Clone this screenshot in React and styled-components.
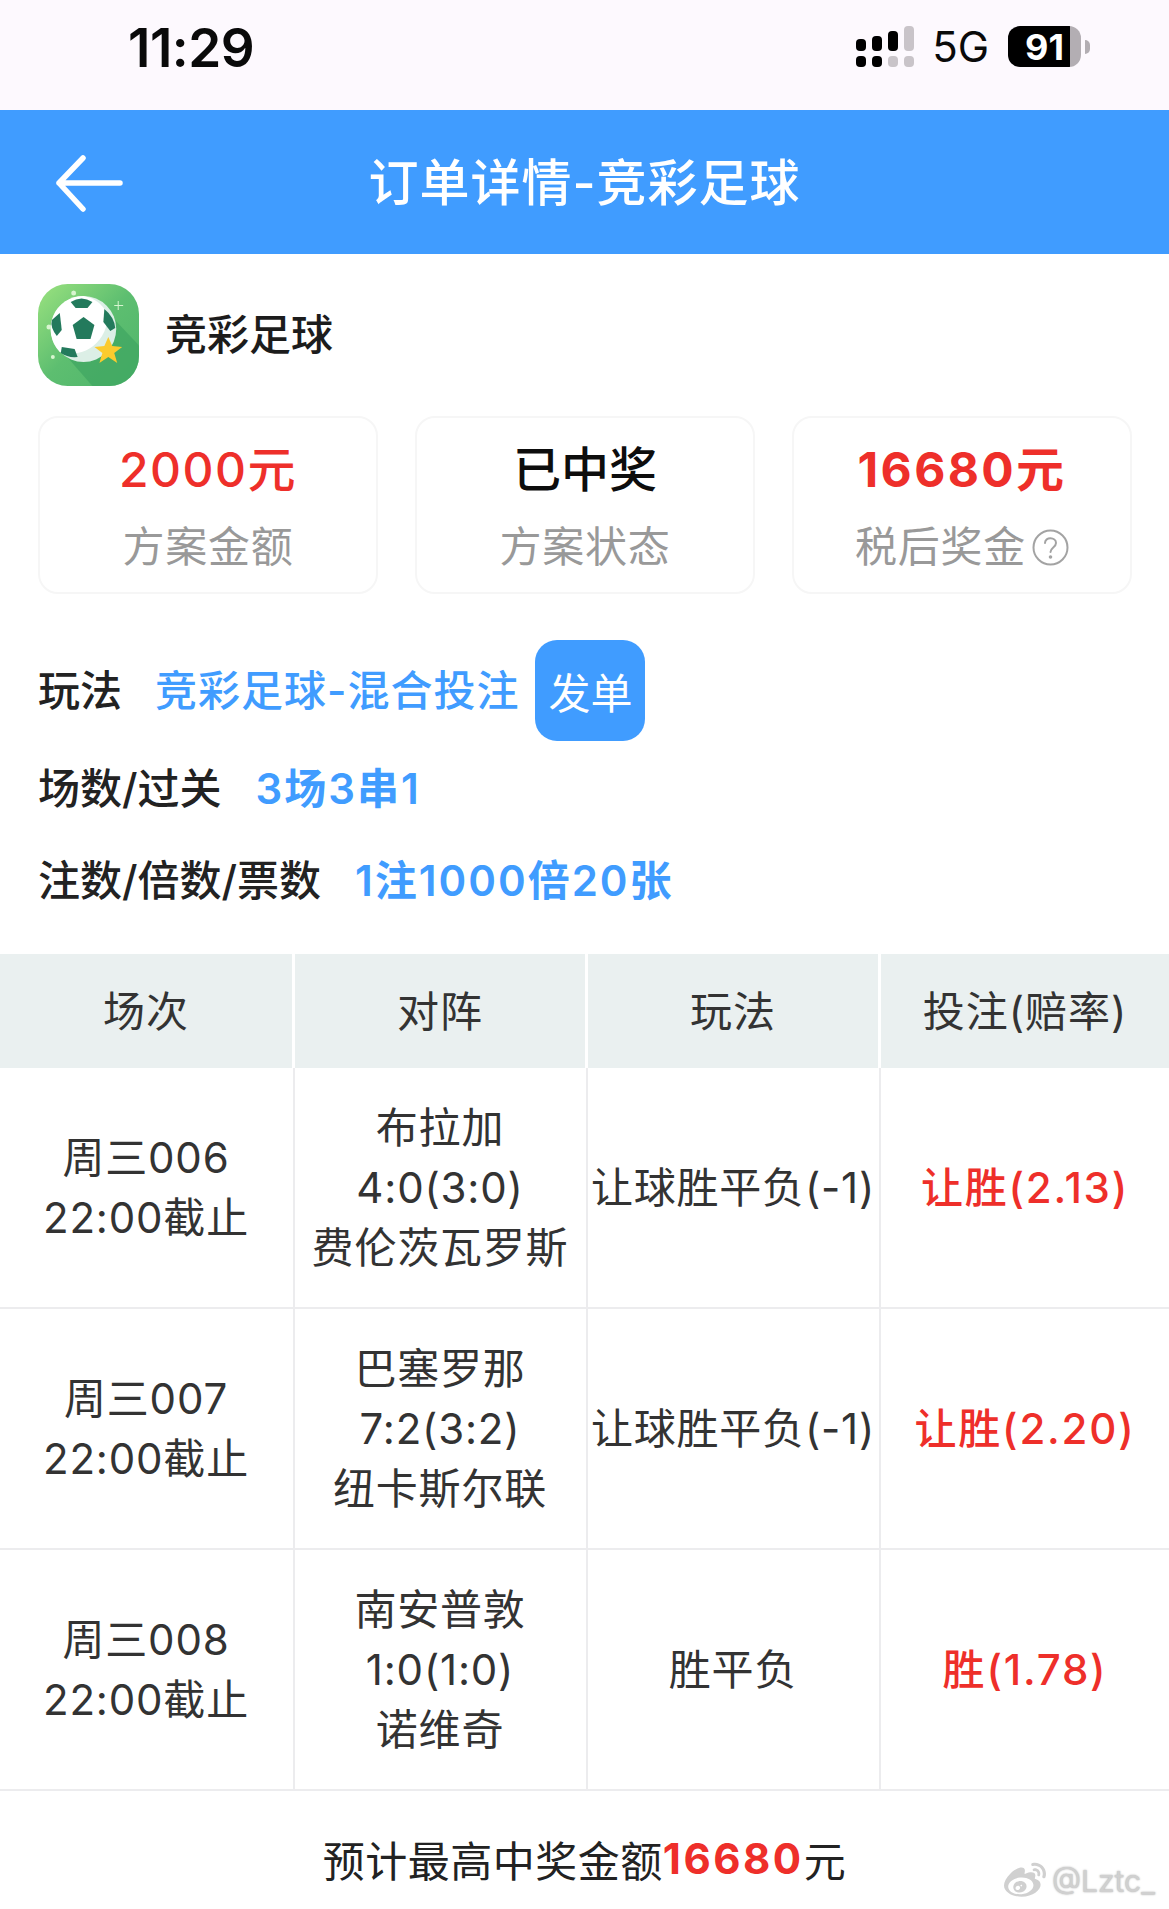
import styled, { createGlobalStyle } from 'styled-components';
import { FaWeibo } from 'react-icons/fa';

const GlobalStyle = createGlobalStyle`
  html, body {
    margin: 0;
    padding: 0;
    background: #fff;
  }
  * {
    box-sizing: border-box;
  }
  body {
    font-family: Inter, "Noto Sans CJK SC", sans-serif;
    color: #222;
  }
`;

const Page = styled.div`
  position: relative;
  width: 1169px;
  height: 1909px;
  overflow: hidden;
  background: #fff;
`;

/* status bar */
const StatusBar = styled.div`
  height: 110px;
  background: #fdf9fe;
  display: flex;
  align-items: flex-start;
  justify-content: space-between;
  padding: 18px 79px 0 128px;
`;

const Clock = styled.div`
  font-size: 53px;
  line-height: 60px;
  font-weight: 600;
  color: #0a0a0a;
  letter-spacing: -0.5px;
`;

const StatusIcons = styled.div`
  display: flex;
  align-items: center;
  margin-top: 8px;
  height: 41px;
`;

const NetLabel = styled.div`
  font-size: 42px;
  line-height: 41px;
  font-weight: 400;
  color: #0a0a0a;
  margin: 0 19px 0 16px;
`;

const Battery = styled.div`
  width: 73px;
  height: 41px;
  border-radius: 12px;
  background: linear-gradient(to right, #000 62px, #b3aeb3 62px);
  color: #fff;
  font-size: 36px;
  font-weight: 700;
  display: flex;
  align-items: center;
  padding-left: 17px;
`;

const BatteryNub = styled.div`
  width: 5px;
  height: 14px;
  margin-left: 4px;
  background: #b3aeb3;
  border-radius: 0 7px 7px 0;
`;

/* blue nav */
const NavBar = styled.div`
  height: 144px;
  background: #409cff;
  display: flex;
  align-items: center;
  justify-content: center;
  position: relative;
`;

const BackIcon = styled.svg`
  position: absolute;
  left: 54px;
  top: 44px;
`;

const NavTitle = styled.div`
  font-size: 50px;
  line-height: 70px;
  font-weight: 500;
  letter-spacing: 1px;
  color: #fff;
  margin-top: 1px;
`;

/* lottery head */
const LotteryHead = styled.div`
  display: flex;
  align-items: center;
  gap: 26px;
  padding: 30px 0 0 38px;
`;

const LotteryName = styled.div`
  font-size: 42px;
  line-height: 60px;
  font-weight: 500;
  color: #1c1c1c;
`;

const Cards = styled.div`
  display: grid;
  grid-template-columns: repeat(3, 340px);
  column-gap: 37px;
  padding: 30px 0 0 38px;
`;

const Card = styled.div`
  height: 178px;
  border: 2px solid #f6f6f6;
  border-radius: 20px;
  display: flex;
  flex-direction: column;
  align-items: center;
  padding-top: 18px;
`;

const CardValue = styled.div`
  font-size: 48px;
  line-height: 68px;
  font-weight: ${(props) => props.$weight || 500};
  color: ${(props) => props.$color || '#0d0d0d'};
  letter-spacing: ${(props) => props.$spacing || '0'};
`;

const CardLabel = styled.div`
  display: flex;
  align-items: center;
  gap: 6px;
  font-size: 42px;
  line-height: 60px;
  letter-spacing: 0.8px;
  color: #999;
  margin-top: 13px;
`;

/* info rows */
const InfoList = styled.div`
  padding: 46px 0 0 38px;
`;

const InfoRow = styled.div`
  display: flex;
  align-items: center;
  height: ${(props) => props.$height}px;
`;

const InfoLabel = styled.div`
  font-size: 42px;
  line-height: 60px;
  font-weight: 500;
  color: #222;
  margin-right: ${(props) => props.$gap}px;
`;

const InfoValue = styled.div`
  font-size: 42px;
  line-height: 60px;
  font-weight: ${(props) => props.$weight || 500};
  letter-spacing: ${(props) => props.$spacing || '1px'};
  color: #409cff;
`;

const SendButton = styled.div`
  width: 110px;
  height: 101px;
  margin-left: 16px;
  border-radius: 22px;
  background: #409cff;
  color: #fff;
  font-size: 42px;
  display: flex;
  align-items: center;
  justify-content: center;
`;

/* table */
const MatchTable = styled.div`
  margin-top: 29px;
  display: grid;
  grid-template-columns: 295px 293px 293px 288px;
`;

const HeadCell = styled.div`
  height: 114px;
  padding: ${(props) => (props.$last ? '0 0 6px' : '0 3px 6px 0')};
  background: #eaf0f0;
  box-shadow: ${(props) => (props.$last ? 'none' : 'inset -3px 0 0 #fff')};
  display: flex;
  align-items: center;
  justify-content: center;
  font-size: 42px;
  letter-spacing: 1px;
  color: #333;
`;

const BodyCell = styled.div`
  height: 241px;
  padding-right: ${(props) => (props.$last ? '0' : '3px')};
  box-shadow: ${(props) => (props.$last ? 'none' : 'inset -2px 0 0 #ececee')};
  border-bottom: 2px solid #ececee;
  display: flex;
  flex-direction: column;
  align-items: center;
  justify-content: center;
  font-size: 42px;
  line-height: 60px;
  letter-spacing: ${(props) => (props.$red ? '1.8px' : '0.8px')};
  color: ${(props) => (props.$red ? '#ee2f2a' : '#333')};
  font-weight: ${(props) => (props.$red ? 500 : 400)};
  white-space: nowrap;
`;

const Footer = styled.div`
  height: 119px;
  padding-top: 16px;
  display: flex;
  align-items: center;
  justify-content: center;
  font-size: 42px;
  letter-spacing: 0.5px;
  color: #222;
`;

const FooterAmount = styled.span`
  color: #ee2f2a;
  font-weight: 700;
  letter-spacing: 2.5px;
`;

const Watermark = styled.div`
  position: absolute;
  left: 1004px;
  top: 1860px;
  display: flex;
  align-items: center;
  gap: 6px;
  font-size: 30px;
  line-height: 40px;
  color: #d0d0d0;
  text-shadow: 0 0 2px #a8a8a8;
`;

const SignalIcon = () => (
  <svg width="60" height="41" viewBox="0 0 60 41">
    <rect x="0" y="13" width="10" height="12" rx="4" fill="#000" />
    <rect x="16" y="10" width="10" height="15" rx="4" fill="#000" />
    <rect x="32" y="5" width="10" height="20" rx="4" fill="#000" />
    <rect x="48" y="0" width="10" height="25" rx="4" fill="#c9c4c9" />
    <rect x="0" y="30" width="10" height="11" rx="4" fill="#000" />
    <rect x="16" y="30" width="10" height="11" rx="4" fill="#000" />
    <rect x="32" y="30" width="10" height="11" rx="4" fill="#c9c4c9" />
    <rect x="48" y="30" width="10" height="11" rx="4" fill="#c9c4c9" />
  </svg>
);

const BallIcon = () => (
  <svg width="101" height="102" viewBox="0 0 102 102" preserveAspectRatio="none">
    <defs>
      <linearGradient id="ballBg" x1="0" y1="0" x2="1" y2="1">
        <stop offset="0" stopColor="#9be27f" />
        <stop offset="0.5" stopColor="#5dbe70" />
        <stop offset="1" stopColor="#4fb56b" />
      </linearGradient>
      <clipPath id="ballClip">
        <rect x="0" y="0" width="102" height="102" rx="30" />
      </clipPath>
    </defs>
    <rect x="0" y="0" width="102" height="102" rx="30" fill="url(#ballBg)" />
    <path d="M25 68 L72 30 L110 70 L110 110 L62 110 Z" fill="#3fa561" opacity="0.7" clipPath="url(#ballClip)" />
    <circle cx="46" cy="45" r="33" fill="#dcefe6" />
    <path d="M46 12 A33 33 0 0 0 22 68 A37 37 0 0 0 70 30 A33 33 0 0 0 46 12 Z" fill="#fff" />
    <path d="M46 33 L57 41 L53 55 L39 55 L35 41 Z" fill="#237a5c" />
    <path d="M33 18 Q44 11 55 18 L50 24 L38 24 Z" fill="#237a5c" />
    <path d="M67 25 Q77 33 78 44 L73 47 L66 38 Z" fill="#237a5c" />
    <path d="M22 29 L24 46 L19 52 Q12 43 14 36 Z" fill="#237a5c" />
    <path d="M24 63 L37 65 L40 73 Q30 74 23 69 Z" fill="#237a5c" />
    <path d="M71 53 L75 62 L85 63 L77 69 L80 79 L71 73 L62 79 L65 69 L57 63 L67 62 Z" fill="#fbcb2e" />
    <circle cx="36" cy="9" r="2.500" fill="#d8f5d0" />
    <circle cx="11" cy="43" r="2.500" fill="#d8f5d0" />
    <circle cx="15" cy="73" r="2" fill="#d8f5d0" />
    <path d="M81 17 V26 M77 21.500 H86" stroke="#d8f5d0" strokeWidth="1" />
  </svg>
);

const HelpIcon = () => (
  <svg width="37" height="37" viewBox="0 0 37 37" fill="none" stroke="#a3a3a3" strokeWidth="2">
    <circle cx="18.500" cy="18.500" r="17" />
    <path d="M13 14 C13 7.500 24 8 24 14 C24 18.500 18.500 18.500 18.500 23" strokeLinecap="round" />
    <circle cx="18.500" cy="28" r="0.800" fill="#a3a3a3" />
  </svg>
);

const matches = [
  {
    time: '周三006',
    teams: ['布拉加', '4:0(3:0)', '费伦茨瓦罗斯'],
    play: '让球胜平负(-1)',
    pick: '让胜(2.13)',
  },
  {
    time: '周三007',
    teams: ['巴塞罗那', '7:2(3:2)', '纽卡斯尔联'],
    play: '让球胜平负(-1)',
    pick: '让胜(2.20)',
  },
  {
    time: '周三008',
    teams: ['南安普敦', '1:0(1:0)', '诺维奇'],
    play: '胜平负',
    pick: '胜(1.78)',
  },
];

const App = () => {
  return (
    <Page>
      <GlobalStyle />
      <StatusBar>
        <Clock>11:29</Clock>
        <StatusIcons>
          <SignalIcon />
          <NetLabel>5G</NetLabel>
          <Battery>91</Battery>
          <BatteryNub />
        </StatusIcons>
      </StatusBar>

      <NavBar>
        <BackIcon width="72" height="58" viewBox="0 0 72 58" fill="none" stroke="#fff" strokeWidth="5.500" strokeLinecap="round" strokeLinejoin="round">
          <path d="M29 4 L5 29 L29 55 M5 29 H66" />
        </BackIcon>
        <NavTitle>订单详情-竞彩足球</NavTitle>
      </NavBar>

      <LotteryHead>
        <BallIcon />
        <LotteryName>竞彩足球</LotteryName>
      </LotteryHead>

      <Cards>
        <Card>
          <CardValue $color="#ee2f2a" $spacing="1.500px">2000元</CardValue>
          <CardLabel>方案金额</CardLabel>
        </Card>
        <Card>
          <CardValue>已中奖</CardValue>
          <CardLabel>方案状态</CardLabel>
        </Card>
        <Card>
          <CardValue $color="#ee2f2a" $weight={700} $spacing="2.400px">16680元</CardValue>
          <CardLabel>税后奖金<HelpIcon /></CardLabel>
        </Card>
      </Cards>

      <InfoList>
        <InfoRow $height={101}>
          <InfoLabel $gap={33}>玩法</InfoLabel>
          <InfoValue>竞彩足球-混合投注</InfoValue>
          <SendButton>发单</SendButton>
        </InfoRow>
        <InfoRow $height={95}>
          <InfoLabel $gap={34}>场数/过关</InfoLabel>
          <InfoValue $weight={600} $spacing="2px">3场3串1</InfoValue>
        </InfoRow>
        <InfoRow $height={89}>
          <InfoLabel $gap={34}>注数/倍数/票数</InfoLabel>
          <InfoValue $weight={600} $spacing="2px">1注1000倍20张</InfoValue>
        </InfoRow>
      </InfoList>

      <MatchTable>
        <HeadCell>场次</HeadCell>
        <HeadCell>对阵</HeadCell>
        <HeadCell>玩法</HeadCell>
        <HeadCell $last>投注(赔率)</HeadCell>
        {matches.map((match) => [
          <BodyCell key={match.time + 'time'}>
            <div>{match.time}</div>
            <div>22:00截止</div>
          </BodyCell>,
          <BodyCell key={match.time + 'teams'}>
            {match.teams.map((line) => (
              <div key={line}>{line}</div>
            ))}
          </BodyCell>,
          <BodyCell key={match.time + 'play'}>{match.play}</BodyCell>,
          <BodyCell key={match.time + 'pick'} $last $red>{match.pick}</BodyCell>,
        ])}
      </MatchTable>

      <Footer>
        预计最高中奖金额<FooterAmount>16680</FooterAmount>元
      </Footer>

      <Watermark>
        <FaWeibo size={42} />
        <span>@Lztc_</span>
      </Watermark>
    </Page>
  );
};

export default App;
